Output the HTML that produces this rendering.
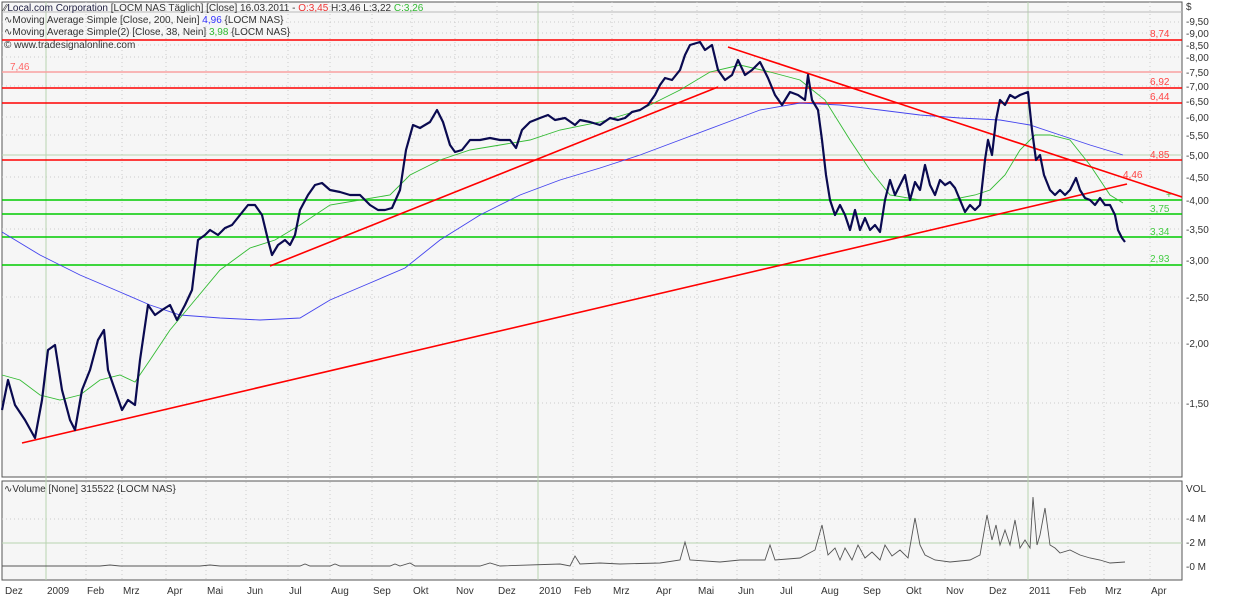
<!DOCTYPE html>
<html><head><style>
body{margin:0;background:#fff;width:1233px;height:597px;overflow:hidden;font-family:"Liberation Sans",sans-serif}
svg text{font-family:"Liberation Sans",sans-serif;font-size:10px}
</style></head><body>
<svg width="1233" height="597" xmlns="http://www.w3.org/2000/svg">
<rect x="2" y="2" width="1180" height="475" fill="#f6f6f6" stroke="#555"/>
<rect x="2" y="481" width="1180" height="99" fill="#f6f6f6" stroke="#555"/>
<g stroke="#ccc" stroke-dasharray="1,3">
<line x1="2" x2="1182" y1="22" y2="22"/><line x1="2" x2="1182" y1="33" y2="33"/><line x1="2" x2="1182" y1="45" y2="45"/><line x1="2" x2="1182" y1="57" y2="57"/><line x1="2" x2="1182" y1="86" y2="86"/><line x1="2" x2="1182" y1="117" y2="117"/><line x1="2" x2="1182" y1="135" y2="135"/><line x1="2" x2="1182" y1="177" y2="177"/><line x1="2" x2="1182" y1="229" y2="229"/><line x1="2" x2="1182" y1="297" y2="297"/><line x1="2" x2="1182" y1="343" y2="343"/><line x1="2" x2="1182" y1="403" y2="403"/>
<line x1="2" x2="1182" y1="519" y2="519"/><line x1="2" x2="1182" y1="543" y2="543"/>
</g>
<g stroke="#ccc" stroke-dasharray="1,3">
<path d="M86 2V580M122 2V580M166 2V580M206 2V580M246 2V580M288 2V580M330 2V580M372 2V580M412 2V580M455 2V580M497 2V580M573 2V580M612 2V580M655 2V580M697 2V580M737 2V580M779 2V580M820 2V580M862 2V580M905 2V580M945 2V580M988 2V580M1068 2V580M1104 2V580M1150 2V580"/>
</g>
<g stroke="#b8d4b0"><path d="M46 2V580M538 2V580M1028 2V580"/><line x1="2" x2="1182" y1="155" y2="155"/><line x1="2" x2="1182" y1="543" y2="543"/></g>
<line x1="2" x2="1182" y1="12" y2="12" stroke="#bbb"/>
<!-- horizontal levels -->
<g stroke="#ff0000" stroke-width="1.5">
<line x1="2" x2="1182" y1="40" y2="40"/><line x1="2" x2="1182" y1="88" y2="88"/><line x1="2" x2="1182" y1="103" y2="103"/><line x1="2" x2="1182" y1="160" y2="160"/>
</g>
<line x1="2" x2="1182" y1="72" y2="72" stroke="#f9a0a0" stroke-width="1.5"/>
<g stroke="#00cc00" stroke-width="1.5">
<line x1="2" x2="1182" y1="200" y2="200"/><line x1="2" x2="1182" y1="214" y2="214"/><line x1="2" x2="1182" y1="237" y2="237"/><line x1="2" x2="1182" y1="265" y2="265"/>
</g>
<g fill="#f44" font-size="10"><text x="1150" y="37">8,74</text><text x="10" y="70" fill="#f66">7,46</text><text x="1150" y="85">6,92</text><text x="1150" y="100">6,44</text><text x="1150" y="158">4,85</text><text x="1123" y="178">4,46</text></g>
<g fill="#4c4"><text x="1150" y="212">3,75</text><text x="1150" y="235">3,34</text><text x="1150" y="262">2,93</text><text x="1166" y="198">+</text></g>
<!-- MAs -->
<polyline fill="none" stroke="#4444ee" stroke-width="0.9" points="2,232 40,255 80,275 120,292 150,305 180,315 220,318 260,320 300,318 330,300 370,283 405,268 440,240 480,215 520,195 560,180 600,168 640,155 680,140 720,125 760,110 800,103 840,105 880,110 920,115 960,118 1000,120 1030,125 1060,135 1090,145 1123,155"/>
<polyline fill="none" stroke="#33bb33" stroke-width="0.9" points="2,375 20,380 40,395 60,400 80,395 100,380 120,375 135,382 150,360 170,330 195,300 220,270 250,248 275,240 300,225 330,205 360,200 390,195 410,175 440,160 470,150 500,145 530,140 560,130 600,122 640,110 680,90 710,72 740,65 770,72 800,80 825,100 850,140 870,170 890,195 920,200 950,200 975,195 990,190 1005,175 1020,150 1035,135 1050,135 1070,140 1090,165 1110,195 1123,203"/>
<!-- trend lines -->
<g stroke="#ff0000" stroke-width="1.6"><line x1="22" y1="443" x2="1127" y2="184"/><line x1="270" y1="266" x2="718" y2="87"/><line x1="728" y1="47" x2="1182" y2="197"/></g>
<polyline fill="none" stroke="#0a0a50" stroke-width="2.2" stroke-linejoin="round" points="2,410 8,380 15,405 25,420 35,438 42,400 48,350 55,345 62,390 70,420 75,430 82,390 90,370 98,340 104,330 108,370 115,390 122,410 128,400 135,405 140,360 148,305 155,315 162,310 170,305 177,320 185,305 192,290 198,240 205,235 210,230 218,235 225,228 232,225 240,215 248,205 255,205 262,215 268,240 272,255 278,245 285,240 290,245 295,235 300,210 308,195 315,185 322,183 330,190 340,192 350,195 360,195 370,205 378,210 385,210 392,208 400,190 406,150 413,125 420,128 430,122 437,110 443,122 450,145 455,152 462,150 470,140 480,140 490,138 500,140 510,140 516,148 522,130 530,122 540,118 548,115 555,120 565,118 575,125 580,120 590,122 600,125 610,118 618,120 625,118 632,112 640,110 648,105 655,95 660,85 665,78 672,80 680,70 685,55 690,45 700,42 705,50 712,45 718,70 725,80 732,75 738,60 745,75 752,70 760,62 768,78 775,95 782,105 790,92 798,95 805,100 808,75 812,100 818,110 822,140 826,175 830,200 835,215 840,205 845,215 850,230 855,210 860,230 865,218 870,230 875,225 880,232 885,200 890,180 895,195 900,185 905,175 910,200 915,182 920,190 925,165 930,185 935,195 940,180 945,185 950,182 955,188 960,200 965,212 970,205 975,210 980,205 985,160 988,140 992,155 996,120 1000,100 1005,105 1010,95 1015,98 1020,95 1028,92 1032,130 1036,160 1040,155 1044,175 1050,190 1055,195 1060,190 1065,195 1070,190 1076,178 1080,190 1085,198 1090,200 1095,205 1100,198 1105,205 1110,205 1115,215 1118,230 1122,238 1125,242"/>
<!-- volume -->
<polyline fill="none" stroke="#555" stroke-width="0.9" points="2,566 100,566 110,565 120,566 200,566 210,565 220,566 300,566 305,564 310,566 330,566 335,564 340,566 390,566 395,564 400,566 410,563 415,566 480,566 490,563 500,566 560,564 570,566 575,556 580,564 600,563 620,564 660,563 680,560 685,542 690,560 720,562 740,560 765,560 770,545 775,560 800,558 815,550 822,525 828,555 835,548 840,560 845,548 852,560 858,545 865,558 872,552 880,560 885,545 892,556 900,550 908,558 915,518 920,545 925,555 935,560 950,562 970,560 980,555 987,515 992,540 996,525 1000,545 1005,530 1010,545 1015,520 1020,548 1025,540 1030,548 1033,497 1037,545 1040,535 1045,508 1050,545 1055,548 1060,553 1070,550 1080,555 1090,558 1100,560 1110,563 1125,562"/>
<!-- legend -->
<g font-size="9.5" fill="#333">
<text x="4" y="11"><tspan fill="#444">∕∕</tspan><tspan fill="#224">Local.com Corporation</tspan> [LOCM NAS  Täglich] [Close] 16.03.2011 - <tspan fill="#e33">O:3,45</tspan> H:3,46 L:3,22 <tspan fill="#3b3">C:3,26</tspan></text>
<text x="4" y="23">∿Moving Average Simple [Close, 200, Nein] <tspan fill="#33f">4,96</tspan> {LOCM NAS}</text>
<text x="4" y="35">∿Moving Average Simple(2) [Close, 38, Nein] <tspan fill="#3b3">3,98</tspan> {LOCM NAS}</text>
<text x="4" y="48">© www.tradesignalonline.com</text>
<text x="4" y="492">∿Volume [None] 315522 {LOCM NAS}</text>
</g>
<!-- right axis -->
<g font-size="9.5" fill="#333">
<text x="1186" y="10">$</text>
<text x="1186" y="25">-9,50</text><text x="1186" y="37">-9,00</text><text x="1186" y="49">-8,50</text><text x="1186" y="61">-8,00</text><text x="1186" y="76">-7,50</text><text x="1186" y="90">-7,00</text><text x="1186" y="105">-6,50</text><text x="1186" y="121">-6,00</text><text x="1186" y="139">-5,50</text><text x="1186" y="159">-5,00</text><text x="1186" y="181">-4,50</text><text x="1186" y="204">-4,00</text><text x="1186" y="233">-3,50</text><text x="1186" y="264">-3,00</text><text x="1186" y="301">-2,50</text><text x="1186" y="347">-2,00</text><text x="1186" y="407">-1,50</text>
<text x="1186" y="492">VOL</text><text x="1186" y="522">-4 M</text><text x="1186" y="546">-2 M</text><text x="1186" y="570">-0 M</text>
</g>
<g font-size="9.5" fill="#333">
<text x="5" y="594">Dez</text><text x="47" y="594">2009</text><text x="87" y="594">Feb</text><text x="123" y="594">Mrz</text><text x="167" y="594">Apr</text><text x="207" y="594">Mai</text><text x="247" y="594">Jun</text><text x="289" y="594">Jul</text><text x="331" y="594">Aug</text><text x="373" y="594">Sep</text><text x="413" y="594">Okt</text><text x="456" y="594">Nov</text><text x="498" y="594">Dez</text><text x="539" y="594">2010</text><text x="574" y="594">Feb</text><text x="613" y="594">Mrz</text><text x="656" y="594">Apr</text><text x="698" y="594">Mai</text><text x="738" y="594">Jun</text><text x="780" y="594">Jul</text><text x="821" y="594">Aug</text><text x="863" y="594">Sep</text><text x="906" y="594">Okt</text><text x="946" y="594">Nov</text><text x="989" y="594">Dez</text><text x="1029" y="594">2011</text><text x="1069" y="594">Feb</text><text x="1105" y="594">Mrz</text><text x="1151" y="594">Apr</text>
</g>
</svg>
</body></html>
